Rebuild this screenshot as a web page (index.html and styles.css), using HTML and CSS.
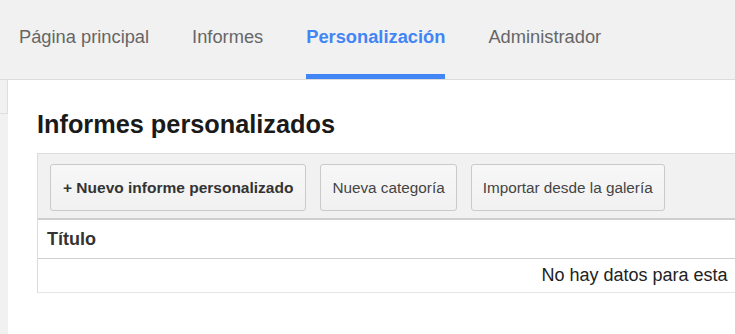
FILE: index.html
```html
<!DOCTYPE html>
<html lang="es">
<head>
<meta charset="utf-8">
<title>Informes personalizados</title>
<link rel="stylesheet" href="styles.css">
</head>
<body>
<nav class="topnav">
  <a class="tab">Página principal</a>
  <a class="tab">Informes</a>
  <a class="tab active">Personalización</a>
  <a class="tab">Administrador</a>
</nav>
<div class="layout">
  <aside class="strip"><div class="toggle"></div></aside>
  <main class="main">
    <h1 class="title">Informes personalizados</h1>
    <section class="table">
      <div class="toolbar">
        <button class="btn primary">+ Nuevo informe personalizado</button>
        <button class="btn">Nueva categoría</button>
        <button class="btn">Importar desde la galería</button>
      </div>
      <div class="head-row">Título</div>
      <div class="empty-row">No hay datos para esta</div>
    </section>
  </main>
</div>
</body>
</html>
```

FILE: styles.css
```css
html, body {
  margin: 0;
  padding: 0;
  overflow: hidden;
  background: #fff;
  font-family: "Liberation Sans", Arial, sans-serif;
}

.topnav {
  display: flex;
  gap: 43px;
  height: 79px;
  padding-left: 19px;
  background: #f1f1f1;
  border-bottom: 1px solid #dcdcdc;
}

.tab {
  box-sizing: border-box;
  height: 79px;
  padding-top: 26px;
  font-size: 18.3px;
  line-height: 22px;
  color: #666;
  border-bottom: 5px solid transparent;
  white-space: nowrap;
}

.tab.active {
  color: #4285f4;
  font-weight: bold;
  border-bottom-color: #4285f4;
}

.layout {
  display: flex;
  height: 254px;
}

.strip {
  flex: 0 0 8px;
  background: #f1f1f1;
}

.toggle {
  box-sizing: border-box;
  width: 8px;
  height: 34px;
  border: 1px solid #dedede;
  border-left: none;
  border-top: none;
  background: #f1f1f1;
}

.main {
  flex: 1;
  min-width: 0;
  padding: 29px 0 0 29px;
  overflow: hidden;
}

.title {
  margin: 0 0 14px;
  font-size: 25.3px;
  line-height: 30px;
  font-weight: bold;
  color: #1a1a1a;
  white-space: nowrap;
}

.table {
  width: 1193px;
  border-left: 1px solid #dcdcdc;
}

.toolbar {
  display: flex;
  gap: 14px;
  padding: 10px 12px 7px;
  background: #f1f1f1;
  border-top: 1px solid #dcdcdc;
  border-bottom: 2px solid #cfcfcf;
}

.btn {
  box-sizing: border-box;
  height: 47px;
  padding: 0 11px;
  font-family: "Liberation Sans", Arial, sans-serif;
  font-size: 15.3px;
  color: #444;
  background: linear-gradient(#f7f7f7, #f1f1f1);
  border: 1px solid #cacaca;
  border-radius: 3px;
  white-space: nowrap;
}

.btn.primary {
  padding: 0 12px;
  font-size: 15.5px;
  font-weight: bold;
  color: #333;
}

.head-row {
  box-sizing: border-box;
  height: 39px;
  padding: 0 9px;
  display: flex;
  align-items: center;
  font-size: 18px;
  font-weight: bold;
  color: #333;
  border-bottom: 1px solid #cfcfcf;
}

.empty-row {
  box-sizing: border-box;
  height: 34px;
  display: flex;
  align-items: center;
  justify-content: center;
  font-size: 18px;
  color: #222;
  border-bottom: 1px solid #e6e6e6;
}
```
